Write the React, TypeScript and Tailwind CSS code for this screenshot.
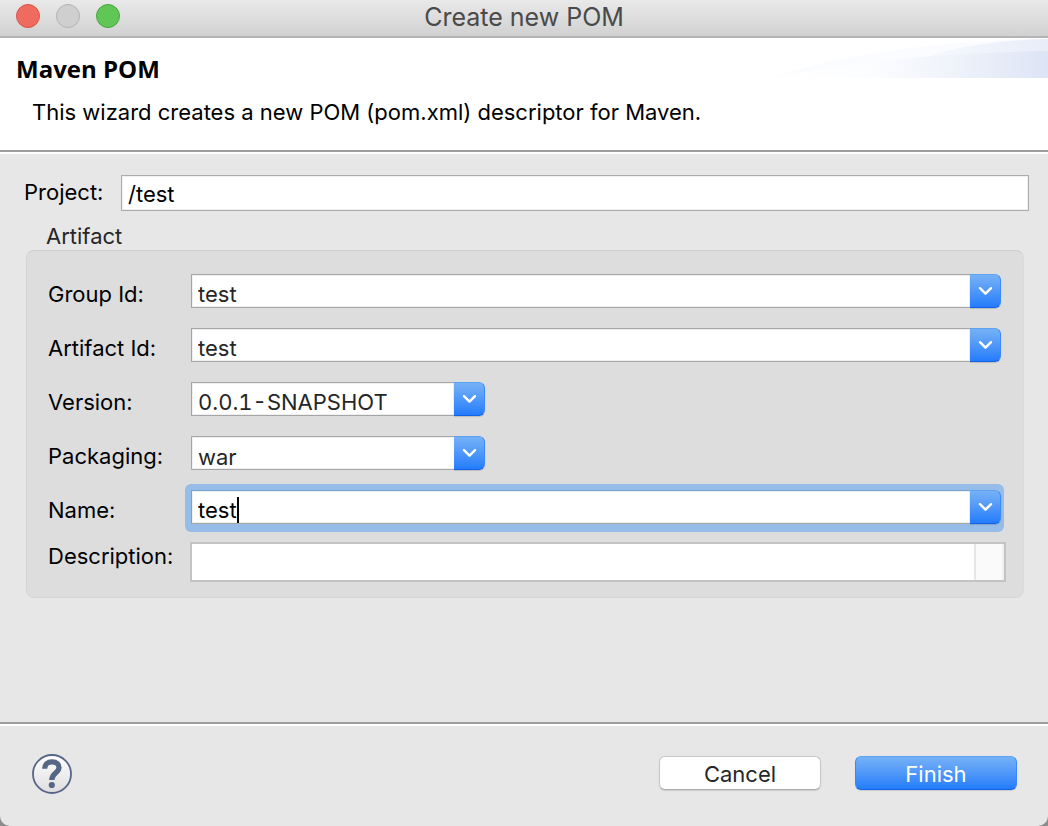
import React, { useState } from "react";

const inputBase =
  "min-w-0 flex-1 border border-r-0 border-[#a5a5a5] bg-white pt-[6px] pl-[6px] text-[#262626] tabular-nums shadow-[inset_0_0_0_1px_#f0f0f0] outline-none";

const arrowBase =
  "flex w-[31px] items-center justify-center rounded-r-md border border-l-0 border-t-[#5ba3f2] border-r-[#3c88f5] border-b-[#1263e8] bg-linear-to-b from-[#76b1f6] to-[#237cfb] shadow-[0_1px_1px_rgba(0,0,0,0.15)]";

const Chevron = () => (
  <svg width="15" height="10" viewBox="0 0 15 10" fill="none">
    <path
      d="M2 2.2 L7.5 7.700 L13 2.200"
      stroke="white"
      strokeWidth="2.4"
      strokeLinecap="round"
      strokeLinejoin="round"
    />
  </svg>
);

const Arrow = ({ label }: { label: string }) => (
  <button type="button" aria-label={label} className={arrowBase}>
    <Chevron />
  </button>
);

const Label = ({ id, children }: { id: string; children: React.ReactNode }) => (
  <label htmlFor={id} className="pt-[6px] whitespace-nowrap">
    {children}
  </label>
);

const Combo = ({ id, value }: { id: string; value: string }) => {
  const [text, setText] = useState(value);
  return (
    <div className="flex h-[34px]">
      <input
        id={id}
        value={text}
        onChange={(e) => setText(e.target.value)}
        className={inputBase}
      />
      <Arrow label={"Show " + id + " history"} />
    </div>
  );
};

const FocusedCombo = ({ id, value }: { id: string; value: string }) => {
  const [text, setText] = useState(value);
  return (
    <div className="relative isolate flex h-[34px]">
      <div className="absolute -top-[6px] -right-[3px] -bottom-[8px] -left-[6px] -z-10 rounded-md bg-[#96bce8]" />
      <div className="flex min-w-0 flex-1 items-center border border-r-0 border-t-[#7ba2cf] border-b-[#a5a5a5] border-l-[#7ba2cf] bg-white pt-[6px] pl-[6px] shadow-[inset_0_0_0_1px_#f0f0f0]">
        <input
          id={id}
          value={text}
          onChange={(e) => setText(e.target.value)}
          className="field-sizing-content max-w-full text-black caret-transparent outline-none"
        />
        <span className="h-[26px] w-[2px] bg-black" />
      </div>
      <Arrow label={"Show " + id + " history"} />
    </div>
  );
};

const App = () => {
  return (
    <div className="min-h-screen bg-[#8c8c8c] font-['Inter','Liberation_Sans',sans-serif] text-[22px] leading-7 text-black">
      <div className="flex min-h-screen flex-col overflow-hidden rounded-b-[10px] bg-[#e7e7e7]">
        {/* title bar */}
        <div className="grid h-[38px] grid-cols-[1fr_auto_1fr] border-b-2 border-[#b4b4b4] bg-linear-to-b from-[#e9e9e9] to-[#d1d1d1]">
          <div className="flex items-center gap-4 pb-[5px] pl-4">
            <button type="button" aria-label="Close" className="size-6 rounded-full border border-[#d9534a] bg-[#ef6b5f]" />
            <button type="button" aria-label="Minimize" className="size-6 rounded-full border border-[#b3b3b3] bg-[#cfcfcf]" />
            <button type="button" aria-label="Zoom" className="size-6 rounded-full border border-[#47a83d] bg-[#60c656]" />
          </div>
          <div className="self-center pb-[2px] text-[25px] text-[#4a4a4a]">Create new POM</div>
        </div>

        {/* wizard header */}
        <div className="flex h-[114px] justify-between border-b-2 border-[#9d9d9d] bg-white">
          <div className="pt-[17px] pl-4">
            <h1 className="font-['Open_Sans','Noto_Sans',sans-serif] text-[24px] font-bold">Maven POM</h1>
            <p className="mt-[15px] pl-4 whitespace-nowrap">
              This wizard creates a new POM (pom.xml) descriptor for Maven.
            </p>
          </div>
          <svg width="278" height="40" viewBox="0 0 278 40" className="shrink-0">
            <defs>
              <linearGradient id="wave" x1="0" y1="0" x2="1" y2="0">
                <stop offset="0" stopColor="#ffffff" />
                <stop offset="0.35" stopColor="#fcfdff" />
                <stop offset="0.6" stopColor="#f2f5fb" />
                <stop offset="1" stopColor="#dde4f5" />
              </linearGradient>
              <linearGradient id="crest" x1="0" y1="0" x2="1" y2="0">
                <stop offset="0" stopColor="#f7f9fe" />
                <stop offset="1" stopColor="#e8edf8" />
              </linearGradient>
            </defs>
            <path d="M0 40 C70 16 160 4 278 0 V40 Z" fill="#fbfcff" />
            <path d="M155 19 C190 8 230 2 278 1 V40 H155 Z" fill="url(#crest)" />
            <path d="M0 40 C80 24 170 15 278 13 V40 Z" fill="url(#wave)" />
          </svg>
        </div>

        {/* form */}
        <form className="flex-1 border-t-2 border-white pt-[21px] pr-[19px] pl-6">
          <div className="flex">
            <label htmlFor="project" className="w-[97px] pt-[3px]">Project:</label>
            <input
              id="project"
              defaultValue="/test"
              className="h-9 min-w-0 flex-1 border border-[#acacac] bg-white pt-[2px] pl-[6px] shadow-[inset_0_0_0_1px_#f0f0f0] outline-none"
            />
          </div>

          <div className="mt-[11px] pl-[22px] text-[#262626]" id="artifact-group">Artifact</div>
          <div
            role="group"
            aria-labelledby="artifact-group"
            className="mr-[5px] ml-[2px] rounded-lg border border-t-[#cdcdcd] border-r-[#dadada] border-b-[#d8d8d8] border-l-[#d6d6d6] bg-[#dddddd] pt-[23px] pr-[17px] pb-[15px] pl-[21px]"
          >
            <div className="mr-[5px] grid grid-cols-[143px_1fr] gap-y-5">
              <Label id="group">Group Id:</Label>
              <Combo id="group" value="test" />
              <Label id="artifact">Artifact Id:</Label>
              <Combo id="artifact" value="test" />
              <Label id="version">Version:</Label>
              <div className="max-w-[294px]">
                <Combo id="version" value="0.0.1-SNAPSHOT" />
              </div>
              <Label id="packaging">Packaging:</Label>
              <div className="relative flex h-[34px] max-w-[294px]">
                <select
                  id="packaging"
                  defaultValue="war"
                  className="w-full appearance-none rounded-r-lg border border-[#a5a5a5] bg-white pt-[6px] pl-[6px] text-[#262626] shadow-[inset_0_0_0_1px_#f0f0f0] outline-none"
                >
                  <option>war</option>
                </select>
                <span className={arrowBase + " pointer-events-none absolute inset-y-0 right-0"}>
                  <Chevron />
                </span>
              </div>
              <Label id="name">Name:</Label>
              <FocusedCombo id="name" value="test" />
            </div>
            <div className="mt-[18px] flex">
              <label htmlFor="description" className="w-[142px] whitespace-nowrap">Description:</label>
              <div className="flex h-10 min-w-0 flex-1 border-2 border-[#c3c3c3] bg-white">
                <textarea id="description" className="min-w-0 flex-1 resize-none px-1 outline-none" />
                <div className="w-[30px] border-r-2 border-l-2 border-r-[#f0f0f0] border-l-[#e6e6e6] bg-[#fafafa]" />
              </div>
            </div>
          </div>
        </form>

        {/* buttons */}
        <div className="border-t-2 border-[#9d9d9d]">
          <div className="flex h-[102px] items-start border-t-2 border-white pt-[28px] pr-[31px] pl-8">
            <button type="button" aria-label="Help" className="size-10">
              <svg width="40" height="40" viewBox="0 0 40 40" fill="none">
                <defs>
                  <linearGradient id="help" x1="0" y1="0" x2="0" y2="1">
                    <stop offset="0" stopColor="#ffffff" />
                    <stop offset="1" stopColor="#dedede" />
                  </linearGradient>
                </defs>
                <circle cx="20" cy="20" r="19" fill="url(#help)" stroke="#566687" strokeWidth="1.8" />
                <path
                  d="M12.7 14.800 C12.700 10.300 15.600 7.900 20 7.900 C24.600 7.900 27 10.200 27 13.600 C27 19 19.800 18.600 19.800 26"
                  stroke="#566687"
                  strokeWidth="5.200"
                />
                <circle cx="19.800" cy="31" r="3.100" fill="#566687" />
              </svg>
            </button>
            <div className="ml-auto flex gap-[34px] pt-[2px]">
              <button
                type="button"
                className="h-[34px] w-[162px] rounded-md border border-[#c6c6c6] border-b-[#adadad] bg-white pt-[2px] text-[#262626] shadow-[0_1px_1px_rgba(0,0,0,0.12)]"
              >
                Cancel
              </button>
              <button
                type="button"
                className="h-[34px] w-[162px] rounded-md border border-t-[#5ba3f2] border-r-[#3c88f5] border-b-[#1263e8] border-l-[#3c88f5] bg-linear-to-b from-[#76b1f6] to-[#237cfb] pt-[2px] text-white shadow-[0_1px_1px_rgba(0,0,0,0.12)]"
              >
                Finish
              </button>
            </div>
          </div>
        </div>
      </div>
    </div>
  );
};

export default App;
